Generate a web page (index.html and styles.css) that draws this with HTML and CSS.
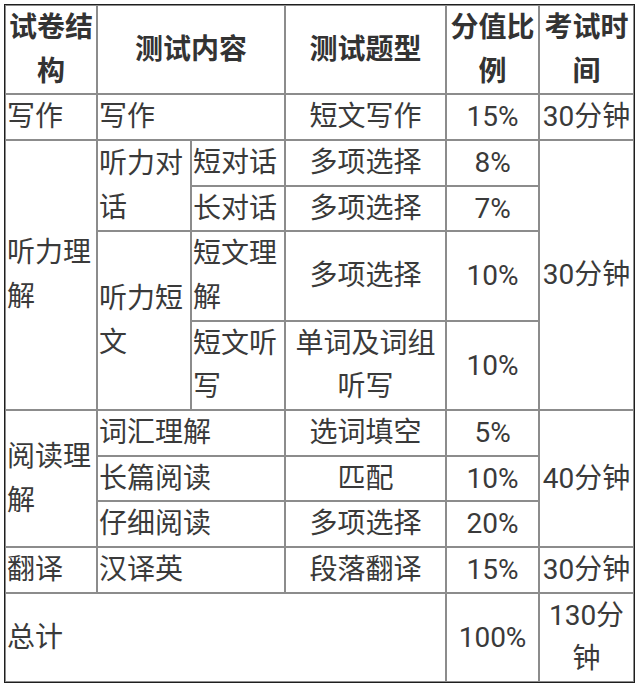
FILE: index.html
```html
<!DOCTYPE html>
<html lang="zh-CN">
<head>
<meta charset="utf-8">
<title>试卷结构</title>
<link rel="stylesheet" href="styles.css">
</head>
<body>
<table class="exam">
  <colgroup>
    <col class="c1"><col class="c2"><col class="c3"><col class="c4"><col class="c5"><col class="c6">
  </colgroup>
  <thead>
    <tr class="head">
      <th>试卷结构</th>
      <th colspan="2">测试内容</th>
      <th>测试题型</th>
      <th>分值比例</th>
      <th>考试时间</th>
    </tr>
  </thead>
  <tbody>
    <tr>
      <td>写作</td>
      <td colspan="2">写作</td>
      <td class="ctr">短文写作</td>
      <td class="ctr">15%</td>
      <td class="ctr">30分钟</td>
    </tr>
    <tr>
      <td rowspan="4">听力理解</td>
      <td rowspan="2">听力对话</td>
      <td>短对话</td>
      <td class="ctr">多项选择</td>
      <td class="ctr">8%</td>
      <td rowspan="4" class="ctr">30分钟</td>
    </tr>
    <tr>
      <td>长对话</td>
      <td class="ctr">多项选择</td>
      <td class="ctr">7%</td>
    </tr>
    <tr>
      <td rowspan="2">听力短文</td>
      <td>短文理解</td>
      <td class="ctr">多项选择</td>
      <td class="ctr">10%</td>
    </tr>
    <tr>
      <td>短文听写</td>
      <td class="ctr">单词及词组听写</td>
      <td class="ctr">10%</td>
    </tr>
    <tr>
      <td rowspan="3">阅读理解</td>
      <td colspan="2">词汇理解</td>
      <td class="ctr">选词填空</td>
      <td class="ctr">5%</td>
      <td rowspan="3" class="ctr">40分钟</td>
    </tr>
    <tr>
      <td colspan="2">长篇阅读</td>
      <td class="ctr">匹配</td>
      <td class="ctr">10%</td>
    </tr>
    <tr>
      <td colspan="2">仔细阅读</td>
      <td class="ctr">多项选择</td>
      <td class="ctr">20%</td>
    </tr>
    <tr>
      <td>翻译</td>
      <td colspan="2">汉译英</td>
      <td class="ctr">段落翻译</td>
      <td class="ctr">15%</td>
      <td class="ctr">30分钟</td>
    </tr>
    <tr class="total">
      <td colspan="4">总计</td>
      <td class="ctr">100%</td>
      <td class="ctr">130分钟</td>
    </tr>
  </tbody>
</table>
</body>
</html>
```
FILE: styles.css
```css
html, body {
  margin: 0;
  padding: 0;
  background: #ffffff;
}

body {
  padding: 4px 0 0 4px;
  font-family: Roboto, "Noto Sans CJK SC", "Noto Sans", sans-serif;
  color: #3a3a3a;
}

.exam {
  table-layout: fixed;
  border-collapse: separate;
  border-spacing: 0;
  border: 1px solid #1e1e1e;
  width: 631px;
}

.c1 { width: 92px; }
.c2 { width: 94px; }
.c3 { width: 94px; }
.c4 { width: 161px; }
.c5 { width: 93px; }
.c6 { width: 95px; }

.exam th,
.exam td {
  border: 1px solid #8c8c8c;
  padding: 0 1px;
  font-size: 28px;
  line-height: 43.67px;
  vertical-align: middle;
  text-align: left;
  word-break: break-all;
}

.exam th {
  font-weight: 700;
  text-align: center;
  color: #333333;
}

.exam td.ctr {
  text-align: center;
}
```
